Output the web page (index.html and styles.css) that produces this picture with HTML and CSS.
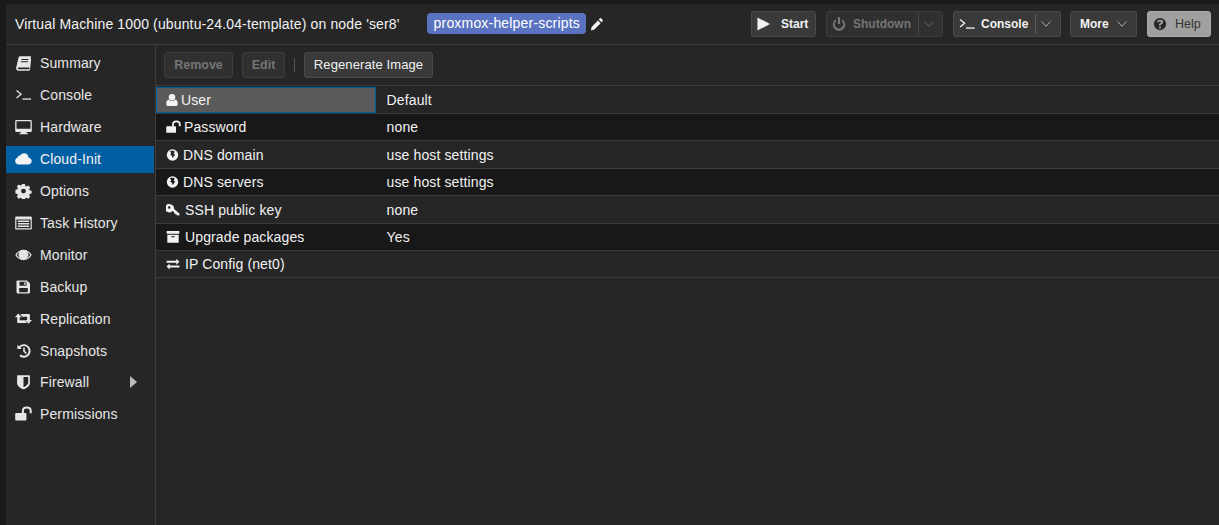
FILE: index.html
```html
<!DOCTYPE html>
<html lang="en">
<head>
<meta charset="utf-8">
<title>Virtual Machine 1000</title>
<link rel="stylesheet" href="styles.css">
</head>
<body>
<svg class="defs" width="0" height="0" aria-hidden="true">
  <symbol id="i-book" viewBox="0 0 16 16"><path d="M4.500 1.200H15.500l-.7 9.800c-.1.900-.6 1.400-1.500 1.400H3.200c-.7 0-1 .5-.9 1s.6.800 1.100.8h9.400c.6 0 1-.4 1.200-1l.8-9.300.8.300-1 10c-.1.900-.7 1.500-1.600 1.500H3c-1.400 0-2.400-1-2.400-2.400 0-.4.100-.8.200-1.200L3 2.700c.3-1 .6-1.500 1.500-1.500z"/><path fill="#262626" d="M6 4h7l-.1.900H5.800zM5.500 6.300h7.200l-.1.900H5.300z"/></symbol>
  <symbol id="i-term" viewBox="0 0 16 16"><path d="M1 3.500l4.600 3.700L1 11" fill="none" stroke="currentColor" stroke-width="1.300"/><rect x="7" y="11.400" width="8.600" height="1.300"/></symbol>
  <symbol id="i-desktop" viewBox="0 0 17 16"><path fill-rule="evenodd" d="M1.500 1h14c.8 0 1.300.5 1.300 1.300v9.400c0 .8-.5 1.300-1.300 1.300h-4.300l.5 1.300h1.300v.9H4.300v-.9h1.300l.5-1.300H1.500C.7 13 .2 12.500.2 11.700V2.300C.2 1.500.7 1 1.500 1zm0 1.300v7.400h14V2.300z"/></symbol>
  <symbol id="i-cloud" viewBox="0 0 17 16"><path d="M4 13.500C1.900 13.500.2 11.900.2 9.900c0-1.500 1-2.800 2.400-3.400C2.900 5 4.100 4.200 5.300 4.500 6.100 3.100 7.500 2.200 9.100 2.200c2.400 0 4.300 1.800 4.400 4.200 1.800.4 3.200 1.800 3.200 3.600 0 2-1.700 3.500-3.800 3.500z"/></symbol>
  <symbol id="i-gear" viewBox="0 0 16 16"><path fill-rule="evenodd" d="M6.600 1h2.800l.4 2 1.100.5 1.800-1.100 2 2-1.100 1.800.5 1.100 2 .4v2.800l-2 .4-.5 1.100 1.100 1.800-2 2-1.800-1.100-1.100.5-.4 2H6.600l-.4-2-1.100-.5-1.800 1.100-2-2 1.100-1.800-.5-1.100-2-.4V6.700l2-.4.500-1.100-1.100-1.800 2-2 1.800 1.100 1.100-.5zM8 5.700a2.400 2.400 0 1 0 0 4.800 2.400 2.400 0 0 0 0-4.800z"/></symbol>
  <symbol id="i-list" viewBox="0 0 17 16"><path fill-rule="evenodd" d="M1.300 1.500h14.400c.6 0 1.100.5 1.100 1.100v10.800c0 .6-.5 1.100-1.100 1.100H1.300c-.6 0-1.100-.5-1.100-1.100V2.600c0-.6.5-1.100 1.100-1.100zM1.400 4.400v8.900h14.200V4.400z"/><path d="M2.800 5.600h11.400v1.300H2.800zM2.800 8.100h11.400v1.300H2.800zM2.800 10.600h11.400v1.300H2.800z"/></symbol>
  <symbol id="i-eye" viewBox="0 0 17 16"><path fill-rule="evenodd" d="M8.500 2.800c3.400 0 6.400 2 8.200 5.200-1.800 3.200-4.800 5.200-8.200 5.200S2.100 11.200.3 8c1.800-3.200 4.800-5.200 8.200-5.200zM1.700 8c1 1.600 2.300 2.800 3.800 3.500A4.300 4.300 0 0 1 5.200 4.400 9.200 9.200 0 0 0 1.700 8zm13.600 0a9.200 9.200 0 0 0-3.500-3.600 4.300 4.300 0 0 1-.3 7.100c1.500-.7 2.800-1.900 3.800-3.500z"/><circle cx="8.500" cy="8" r="3.300"/></symbol>
  <symbol id="i-save" viewBox="0 0 16 16"><path fill-rule="evenodd" d="M2 1.500h9.500l3 3V13c0 .9-.6 1.500-1.500 1.500H2.500C1.600 14.500 1 13.900 1 13V2.500C1 1.900 1.400 1.500 2 1.500zm2 1.200v4h7v-4zm4.800.6h1.300v2.800H8.800zM3.700 9v4.200h8.600V9z"/></symbol>
  <symbol id="i-retweet" viewBox="0 0 17 16"><path d="M3.200 2.600L6.700 6.200H4.700v3h5.200l2.200 2.800H3.200c-.6 0-1-.4-1-1V6.200H-.2zM5.200 2.900h8.700c.6 0 1 .4 1 1v5h2.200l-3.500 3.800-3.500-3.800h2V5.800H7.400z"/></symbol>
  <symbol id="i-history" viewBox="0 0 16 16"><path d="M8.600 1.300A6.700 6.700 0 1 1 3.900 13l1.300-1.400A4.800 4.800 0 1 0 4.800 4.600l1.500 1.500H1.900V1.700L3.500 3.300a6.700 6.700 0 0 1 5.100-2z"/><path d="M7.700 4.600h1.600v3.200l2.100 2.100-1.100 1.100-2.600-2.600z"/></symbol>
  <symbol id="i-shield" viewBox="0 0 16 16"><path fill-rule="evenodd" d="M2.300 1.200h11.400c.5 0 .7.300.7.700v7c0 3.200-3.600 5.300-6.400 6.400C5.200 14.200 1.600 12.100 1.600 8.900v-7c0-.4.200-.7.700-.7zM8 2.900v10.300c2-1 4.700-2.600 4.700-4.500V2.900z"/></symbol>
  <symbol id="i-unlock" viewBox="0 0 17 16"><path d="M1 7h9.600c.5 0 .8.300.8.800v6c0 .5-.3.800-.8.800H1c-.5 0-.8-.3-.8-.8v-6c0-.5.300-.8.800-.8z"/><path d="M7.900 7.500V4.800C7.900 2.900 9.500 1.600 11.800 1.600s3.900 1.300 3.900 3.200v2.400" fill="none" stroke="currentColor" stroke-width="2"/></symbol>
  <symbol id="i-user" viewBox="0 0 14 16"><circle cx="7" cy="4.800" r="3.800"/><path d="M3.100 7.400C4.100 8.500 5.500 9.200 7 9.200s2.900-.7 3.900-1.800c1.700.3 2.700 2 2.700 4.400v1.400c0 1-.7 1.800-1.800 1.800H2.200c-1.100 0-1.800-.8-1.800-1.800v-1.400c0-2.400 1-4.100 2.700-4.400z"/></symbol>
  <symbol id="i-globe" viewBox="0 0 16 16"><path fill-rule="evenodd" d="M8 1a7 7 0 1 1 0 14A7 7 0 0 1 8 1zM5 3.400c.3.900 1.300 1.300 1.200 2.300-.1.800-1.100 1-.8 1.800.4 1 1.800 1 2.200 2 .3.700.1 1.700.4 2.300.9-.4 1.400-1.300 1.800-2.200.3-.7 1.100-.8 1.300-1.500.2-.8-.9-1-1.400-1.600-.4-.5-.1-1.200.4-1.500.5-.3 1-.2 1.100-.7C10 2.800 7 2.300 5 3.400z"/></symbol>
  <symbol id="i-key" viewBox="0 0 17 16"><path fill-rule="evenodd" d="M5 1a5 5 0 0 1 4.800 5.700l6.400 5.400.3 2.400-2.700.2-1-1.300-1.300.3-.1-1.500-1.500-.3-.2-1.500-2-1.300A5 5 0 1 1 5 1zM3.900 3.400a1.600 1.600 0 1 0 0 3.200 1.600 1.600 0 0 0 0-3.200z"/></symbol>
  <symbol id="i-archive" viewBox="0 0 16 16"><path fill-rule="evenodd" d="M.8 1h14.400v3.400H.8zM1.500 5.400h13v8.800c0 .3-.3.500-.6.500H2.100c-.3 0-.6-.2-.6-.5zM6 7v1.300h4V7z"/></symbol>
  <symbol id="i-exchange" viewBox="0 0 16 16"><path d="M11.800 1.900L15.400 5.400l-3.600 3.500V6.600H.7V4.300h11.100zM4.200 7.400v2.200h11.100v2.300H4.200v2.300L.6 10.800z"/></symbol>
  <symbol id="i-pencil" viewBox="0 0 16 16"><path d="M11.300 1.500c.4-.4 1-.4 1.400 0l1.800 1.800c.4.400.4 1 0 1.400l-1.300 1.300L10 3zM9 4l3.200 3.200-7.200 7.200-4 1 .8-4z"/></symbol>
  <symbol id="i-play" viewBox="0 0 14 14"><path d="M.5 0v14L14 7z"/></symbol>
  <symbol id="i-power" viewBox="0 0 16 16"><path d="M4.500 2.600a7 7 0 1 0 7 0v2.500a4.800 4.800 0 1 1-7 0z"/><rect x="6.800" y="0" width="2.400" height="8" rx=".6"/></symbol>
  <symbol id="i-help" viewBox="0 0 16 16"><path fill-rule="evenodd" d="M8 1a7 7 0 1 1 0 14A7 7 0 0 1 8 1zM6.900 11v2h2.200v-2zM8 3.200c-1.800 0-3 .9-3.500 2.300l1.600.9c.4-.8.900-1.300 1.800-1.300.7 0 1.200.4 1.200.9 0 .6-.6.900-1.200 1.300-.8.500-1.100 1.100-1.100 2.200v.3h2.200c0-.8.200-1.100.9-1.500 1-.6 1.700-1.300 1.700-2.500 0-1.700-1.500-2.600-2.600-2.600z"/></symbol>
  <symbol id="i-chev" viewBox="0 0 10 6"><path d="M.5.500L5 5.300 9.500.5" fill="none" stroke="currentColor" stroke-width="1"/></symbol>
</svg>

<div class="app">
  <header class="head">
    <div class="title">Virtual Machine 1000 (ubuntu-24.04-template) on node 'ser8'</div>
    <span class="tag">proxmox-helper-scripts</span>
    <svg class="pencil ico"><use href="#i-pencil"/></svg>
    <div class="head-actions">
      <button class="btn head-btn b-start"><svg class="ico play"><use href="#i-play"/></svg><span>Start</span></button>
      <button class="btn head-btn split off b-shut"><svg class="ico pow"><use href="#i-power"/></svg><span>Shutdown</span><i class="sep"></i><svg class="chev"><use href="#i-chev"/></svg></button>
      <button class="btn head-btn split b-cons"><svg class="ico term"><use href="#i-term"/></svg><span>Console</span><i class="sep"></i><svg class="chev"><use href="#i-chev"/></svg></button>
      <button class="btn head-btn b-more"><span>More</span><svg class="chev"><use href="#i-chev"/></svg></button>
      <button class="btn head-btn help"><svg class="ico hq"><use href="#i-help"/></svg><span>Help</span></button>
    </div>
  </header>
  <div class="body">
    <nav class="side">
      <a class="nav"><svg class="ico"><use href="#i-book"/></svg>Summary</a>
      <a class="nav"><svg class="ico"><use href="#i-term"/></svg>Console</a>
      <a class="nav"><svg class="ico"><use href="#i-desktop"/></svg>Hardware</a>
      <a class="nav on"><svg class="ico"><use href="#i-cloud"/></svg>Cloud-Init</a>
      <a class="nav"><svg class="ico"><use href="#i-gear"/></svg>Options</a>
      <a class="nav"><svg class="ico"><use href="#i-list"/></svg>Task History</a>
      <a class="nav"><svg class="ico"><use href="#i-eye"/></svg>Monitor</a>
      <a class="nav"><svg class="ico"><use href="#i-save"/></svg>Backup</a>
      <a class="nav"><svg class="ico"><use href="#i-retweet"/></svg>Replication</a>
      <a class="nav"><svg class="ico"><use href="#i-history"/></svg>Snapshots</a>
      <a class="nav fw"><svg class="ico"><use href="#i-shield"/></svg>Firewall<b class="arrow"></b></a>
      <a class="nav"><svg class="ico"><use href="#i-unlock"/></svg>Permissions</a>
    </nav>
    <main class="main">
      <div class="tools">
        <button class="btn off t-remove">Remove</button>
        <button class="btn off t-edit">Edit</button>
        <i class="tool-sep"></i>
        <button class="btn t-regen">Regenerate Image</button>
      </div>
      <div class="grid">
        <div class="row sel"><div class="k"><svg class="ico u"><use href="#i-user"/></svg>User</div><div class="v">Default</div></div>
        <div class="row alt"><div class="k"><svg class="ico l"><use href="#i-unlock"/></svg>Password</div><div class="v">none</div></div>
        <div class="row"><div class="k"><svg class="ico g"><use href="#i-globe"/></svg>DNS domain</div><div class="v">use host settings</div></div>
        <div class="row alt"><div class="k"><svg class="ico g"><use href="#i-globe"/></svg>DNS servers</div><div class="v">use host settings</div></div>
        <div class="row"><div class="k"><svg class="ico w"><use href="#i-key"/></svg>SSH public key</div><div class="v">none</div></div>
        <div class="row alt"><div class="k"><svg class="ico w"><use href="#i-archive"/></svg>Upgrade packages</div><div class="v">Yes</div></div>
        <div class="row"><div class="k"><svg class="ico w"><use href="#i-exchange"/></svg>IP Config (net0)</div><div class="v"></div></div>
      </div>
    </main>
  </div>
</div>
</body>
</html>
```

FILE: styles.css
```css
* { box-sizing: border-box; }
html, body { margin: 0; height: 100%; overflow: hidden; }
body { background: #1a1a1a; font: 14px/16px "Liberation Sans", Arial, sans-serif; color: #f2f2f2; }
.defs { position: absolute; }
.app { height: 100%; padding: 4px 0 0 6px; display: flex; flex-direction: column; }
.ico { fill: currentColor; width: 16px; height: 16px; flex: none; }

.head { height: 41px; flex: none; display: flex; align-items: center; background: #262626; border-bottom: 1px solid #3d3d3d; padding: 0 8px 1px 9px; }
.title { color: #f2f2f2; letter-spacing: .14px; }
.tag { margin-left: 27px; height: 21px; line-height: 21px; padding: 0 6px 0 7px; background: #5a73c0; border-radius: 4px; color: #fff; letter-spacing: .18px; }
.pencil { margin-left: 4px; width: 14px; height: 14px; color: #f2f2f2; }
.head-actions { margin-left: auto; display: flex; gap: 10px; }

.btn { font: 13px/16px "Liberation Sans", Arial, sans-serif; letter-spacing: .1px; height: 26px; padding: 0 9px; display: inline-flex; align-items: center; justify-content: center; white-space: nowrap; background: #3a3a3a; border: 1px solid #4a4a4a; border-radius: 3px; color: #f2f2f2; }
.btn.off { color: #757575; background: #303030; border-color: #3d3d3d; }
.head-btn { font-weight: bold; font-size: 12px; letter-spacing: 0; justify-content: flex-start; padding: 0 5px; }
.b-start { width: 65px; }
.b-shut { width: 117px; }
.b-cons { width: 108px; }
.b-more { width: 67px; margin-left: -1px; padding-left: 9px; }
.help { width: 64px; background: #a0a0a0; border-color: #ababab; color: #333; font-weight: normal; font-size: 12.5px; }
.play { width: 13px; height: 14px; margin-right: 11px; }
.pow { width: 14px; height: 14px; margin-right: 7px; color: #7a7a7a; }
.term { margin-right: 6px; }
.hq { width: 14px; height: 14px; margin-right: 8px; color: #262626; }
.sep { width: 1px; height: 20px; flex: none; background: #5a5a5a; margin: 0 5px 0 7px; }
.chev { width: 10px; height: 6px; flex: none; color: #b0b0b0; }
.b-more .chev { margin-left: 8px; }
.off .sep { background: #464646; }
.off .chev { color: #666; }

.body { flex: 1; display: flex; min-height: 0; }
.side { width: 150px; flex: none; background: #262626; border-right: 1px solid #3d3d3d; padding: 4.92px 0 0; display: flex; flex-direction: column; gap: 4.91px; }
.nav { height: 27px; flex: none; display: flex; align-items: center; padding-left: 9px; color: #e6e6e6; margin-right: 1px; letter-spacing: .12px; }
.nav .ico { margin-right: 8px; width: 17px; height: 16px; }
.nav.on { background: #005fa3; color: #f2f2f2; }
.fw { justify-content: flex-start; }
.arrow { margin-left: 41px; width: 0; height: 0; border-left: 7px solid #bdbdbd; border-top: 6px solid transparent; border-bottom: 6px solid transparent; }

.main { flex: 1; min-width: 0; background: #262626; display: flex; flex-direction: column; }
.tools { height: 41px; flex: none; display: flex; align-items: center; padding: 0 8px 0 8px; border-bottom: 1px solid #3d3d3d; }
.t-remove { width: 69px; font-weight: bold; font-size: 12.5px; letter-spacing: 0; }
.t-edit { width: 43px; margin-left: 9px; font-weight: bold; font-size: 12.5px; letter-spacing: 0; }
.tool-sep { width: 1px; height: 14px; background: #555; margin: 0 9px; }
.t-regen { width: 129px; padding: 0; }

.grid { display: flex; flex-direction: column; padding-top: .65px; }
.row { height: 27.4px; flex: none; display: flex; align-items: center; padding-top: .3px; border-bottom: 1px solid #3a3a3a; color: #f2f2f2; letter-spacing: .12px; }
.row.alt { background: #181818; }
.k { width: 220px; height: 100%; display: flex; align-items: center; padding-left: 10px; }
.v { padding-left: 10.6px; }
.sel .k { background: #5a5a5a; border: 1px solid #005fa3; padding-left: 9px; }
.k .ico { height: 14px; width: 14px; margin-right: 2px; }
.k .u { width: 12px; margin-right: 3px; }
.k .l { width: 15px; margin-right: 3px; }
.k .g { width: 13px; margin-right: 4px; }
.k .w { width: 14px; margin-right: 5px; }
```
